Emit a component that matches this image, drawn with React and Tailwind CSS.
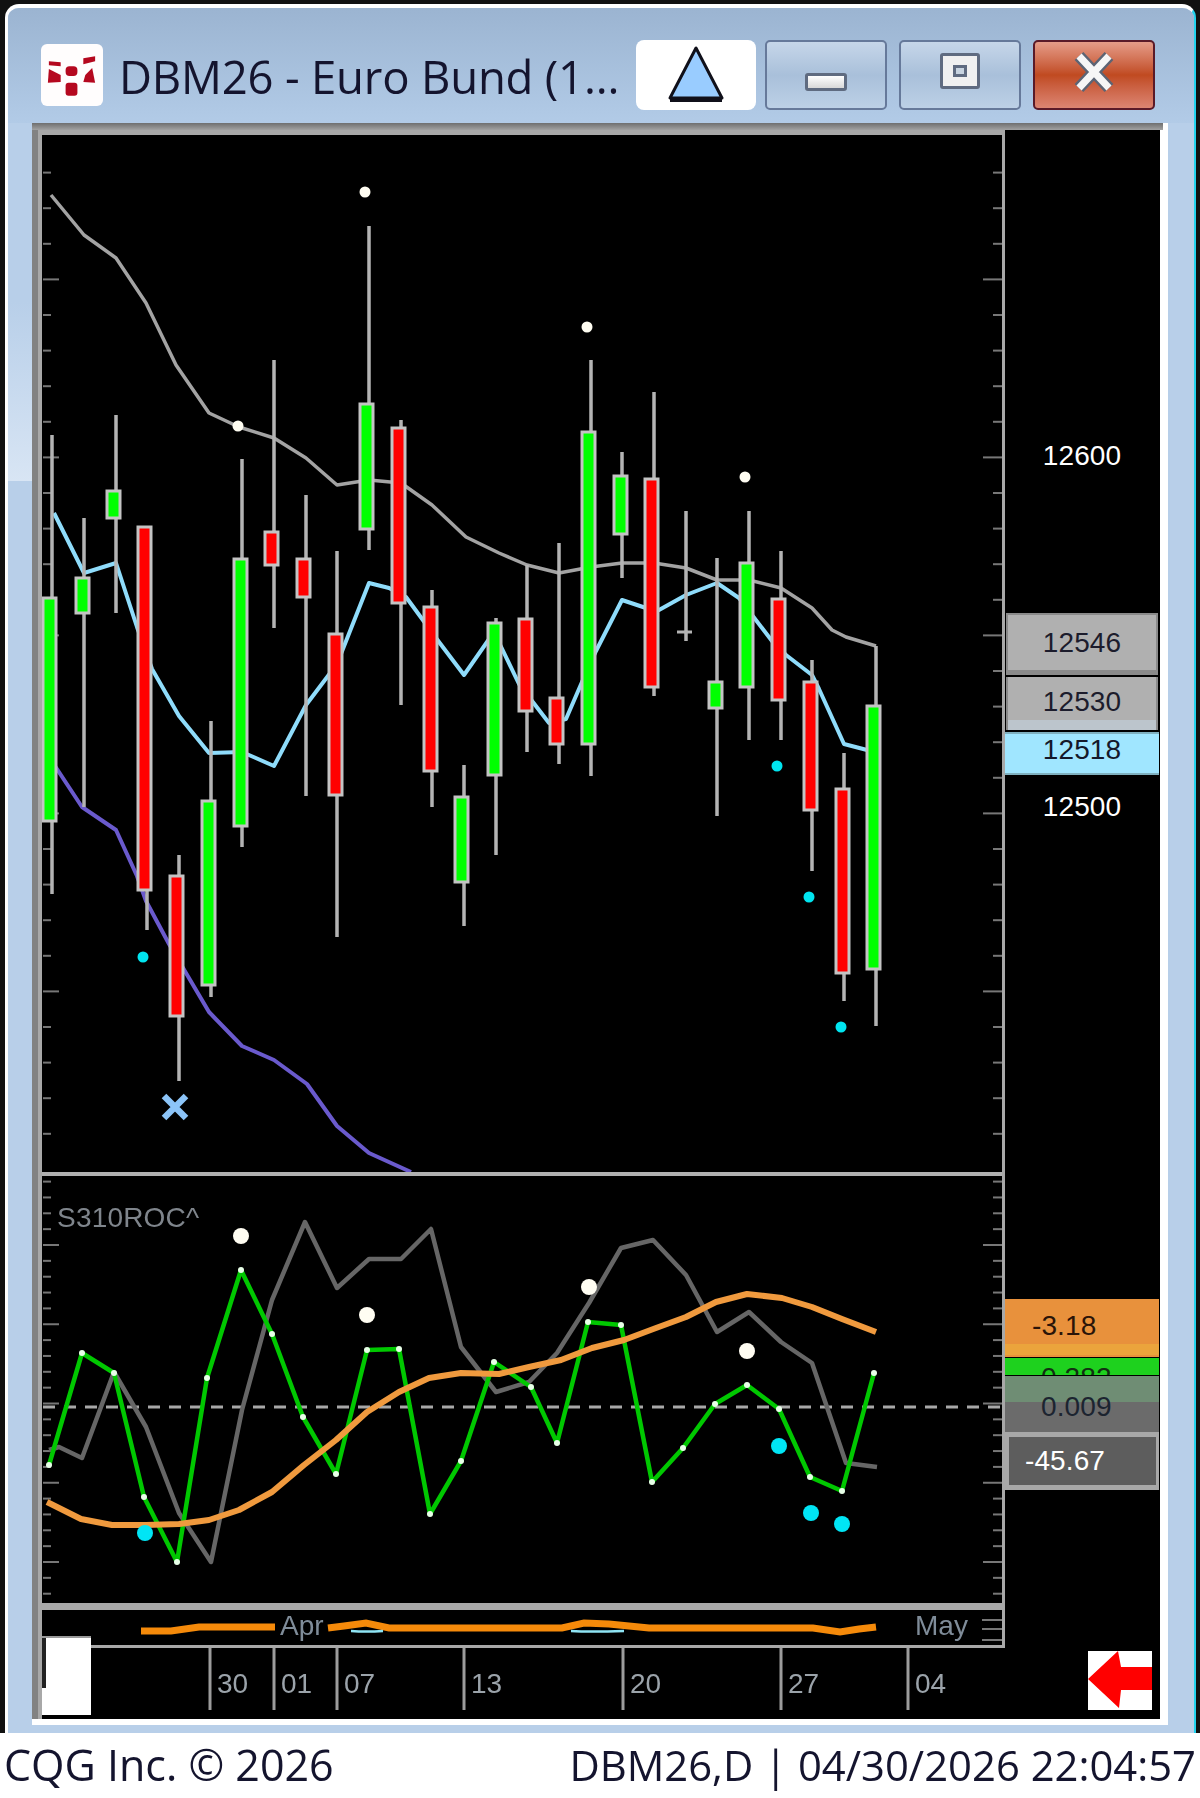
const candles = [
  // x, wickTop, wickBottom, bodyLeft, bodyTop, bodyBottom, up
  [53, 435, 894, 44, 598, 821, true],
  [85, 518, 807, 77, 578, 613, true],
  [117, 415, 613, 108, 491, 518, true],
  [148, 527, 930, 139, 527, 890, false],
  [180, 855, 1081, 171, 876, 1016, false],
  [212, 721, 997, 203, 801, 985, true],
  [243, 459, 847, 235, 559, 826, true],
  [275, 360, 628, 266, 532, 565, false],
  [307, 495, 796, 298, 559, 597, false],
  [338, 551, 937, 330, 634, 795, false],
  [370, 226, 550, 361, 404, 529, true],
  [402, 420, 705, 393, 428, 603, false],
  [433, 590, 807, 425, 607, 771, false],
  [465, 765, 926, 456, 797, 882, true],
  [497, 618, 855, 489, 623, 775, true],
  [528, 565, 752, 520, 619, 711, false],
  [560, 543, 764, 551, 698, 744, false],
  [592, 360, 776, 583, 432, 744, true],
  [623, 452, 578, 615, 476, 534, true],
  [655, 392, 696, 646, 479, 687, false],
  [718, 558, 816, 710, 682, 708, true],
  [750, 511, 740, 741, 563, 687, true],
  [782, 551, 740, 773, 599, 700, false],
  [813, 660, 871, 805, 682, 810, false],
  [845, 753, 1001, 837, 789, 973, false],
  [877, 646, 1026, 868, 706, 969, true],
]

const upperLine = '52,195 85,235 117,258 147,303 177,365 210,413 240,427 275,438 307,458 338,485 370,480 402,483 433,505 467,537 500,553 528,565 560,573 592,567 623,563 655,563 687,568 718,580 750,580 782,588 813,608 833,630 847,637 877,646'
const midLine = '55,513 85,573 117,563 138,627 153,669 180,716 210,753 243,752 275,766 307,705 338,664 370,583 390,588 407,597 440,642 465,675 495,632 520,684 550,723 567,719 583,682 597,651 623,600 647,608 660,610 687,595 718,583 740,598 773,641 787,655 813,675 820,689 845,744 868,750'
const lowLine = '52,760 83,807 117,830 138,876 147,901 170,944 187,973 210,1012 243,1046 275,1060 308,1084 338,1126 370,1153 412,1172'
const rocGreen = [[50, 1465], [83, 1353], [115, 1373], [145, 1497], [178, 1562], [208, 1378], [242, 1270], [273, 1334], [304, 1417], [337, 1474], [368, 1350], [400, 1349], [431, 1514], [462, 1461], [495, 1362], [532, 1387], [558, 1443], [589, 1322], [622, 1325], [653, 1482], [684, 1448], [716, 1404], [748, 1385], [780, 1409], [811, 1477], [843, 1491], [875, 1373]]
const rocGray = '50,1450 60,1447 83,1458 115,1372 147,1427 180,1513 212,1562 243,1410 273,1300 306,1222 338,1288 370,1259 402,1259 432,1229 462,1347 497,1392 530,1382 558,1353 590,1303 622,1248 654,1240 687,1275 718,1332 750,1312 782,1342 813,1363 847,1463 878,1467'
const rocOrange = '48,1502 82,1519 113,1525 147,1525 180,1524 210,1520 240,1510 273,1492 305,1465 337,1440 368,1412 400,1392 430,1378 462,1373 500,1374 530,1367 562,1360 593,1348 625,1340 657,1328 687,1317 717,1302 748,1294 783,1298 813,1307 843,1319 877,1332'

const mainTicks = Array.from({ length: 28 }, (_, i) => 172.6 + i * 35.6)
const lowerTicks = Array.from({ length: 27 }, (_, i) => 1181.6 + i * 15.85)
const dates = [[211, '30'], [275, '01'], [338, '07'], [465, '13'], [624, '20'], [782, '27'], [909, '04']]

function Ticks({ ys, isMajor }) {
  return ys.map((y, i) => {
    const big = isMajor(i)
    return (
      <g key={y} stroke="#777777" strokeWidth="2">
        <line x1="44" x2={big ? 60 : 52} y1={y} y2={y} />
        <line x1={big ? 984 : 994} x2="1003" y1={y} y2={y} />
      </g>
    )
  })
}

function Dot({ x, y, r = 5.5, color = '#fffdf2' }) {
  return <circle cx={x} cy={y} r={r} fill={color} />
}

function MainChart() {
  return (
    <svg className="block w-full h-[1037px] blur-[0.7px]" viewBox="43 135 960 1037">
      <Ticks ys={mainTicks} isMajor={(i) => (i + 2) % 5 === 0} />
      <g fill="none" strokeLinejoin="round">
        <polyline points={upperLine} stroke="#a3a3a3" strokeWidth="3.5" />
        <polyline points={midLine} stroke="#8fdcfb" strokeWidth="4" />
        <polyline points={lowLine} stroke="#6a5acd" strokeWidth="4" />
      </g>
      {candles.map(([x, wt, wb]) => (
        <line key={x} x1={x} x2={x} y1={wt} y2={wb} stroke="#b4b4b4" strokeWidth="3.5" />
      ))}
      <line x1="687" x2="687" y1="511" y2="641" stroke="#b4b4b4" strokeWidth="3.5" />
      <line x1="678" x2="693" y1="632" y2="632" stroke="#b4b4b4" strokeWidth="3" />
      {candles.map(([x, , , left, top, bottom, up]) => (
        <rect key={x} x={left} y={top} width="13" height={bottom - top} fill={up ? '#00ff00' : '#ff0000'} stroke="#c4c4c4" strokeWidth="3" />
      ))}
      <Dot x={366} y={192} />
      <Dot x={239} y={426} />
      <Dot x={588} y={327} />
      <Dot x={746} y={477} />
      <Dot x={144} y={957} color="#00e5f0" />
      <Dot x={778} y={766} color="#00e5f0" />
      <Dot x={810} y={897} color="#00e5f0" />
      <Dot x={842} y={1027} color="#00e5f0" />
      <path d="M165 1096 L187 1118 M187 1096 L165 1118" stroke="#8cc4f8" strokeWidth="6.5" />
    </svg>
  )
}

function RocChart() {
  return (
    <svg className="block w-full h-[427px] blur-[0.7px]" viewBox="43 1176 960 427">
      <Ticks ys={lowerTicks} isMajor={(i) => (i + 1) % 5 === 0} />
      <line x1="44" x2="1003" y1="1407" y2="1407" stroke="#a8a8a8" strokeWidth="3" strokeDasharray="12 9" />
      <g fill="none" strokeLinejoin="round">
        <polyline points={rocGray} stroke="#666666" strokeWidth="4.5" />
        <polyline points={rocGreen.map((p) => p.join(',')).join(' ')} stroke="#00c800" strokeWidth="4.5" />
        <polyline points={rocOrange} stroke="#f09a3e" strokeWidth="6" />
      </g>
      {rocGreen.map(([x, y]) => (
        <circle key={x} cx={x} cy={y} r="3" fill="#e8ffe8" />
      ))}
      <Dot x={242} y={1236} r={8} />
      <Dot x={368} y={1315} r={8} />
      <Dot x={590} y={1287} r={8} />
      <Dot x={748} y={1351} r={8} />
      <Dot x={146} y={1533} r={8} color="#00e5f5" />
      <Dot x={780} y={1446} r={8} color="#00e5f5" />
      <Dot x={812} y={1513} r={8} color="#00e5f5" />
      <Dot x={843} y={1524} r={8} color="#00e5f5" />
      <text x="58" y="1227" fontSize="28" fill="#7f858c" letterSpacing="0.2">S310ROC^</text>
    </svg>
  )
}

function MiniChart() {
  return (
    <svg className="block w-full h-[35px] blur-[0.6px]" viewBox="43 1610 960 35">
      <polyline points="142,1631 172,1631 200,1627 276,1627" fill="none" stroke="#f58a0a" strokeWidth="7" />
      <polyline points="329,1628 345,1626 367,1623 390,1628 563,1628 585,1623 610,1624 650,1628 814,1628 841,1632 860,1629 877,1627" fill="none" stroke="#f58a0a" strokeWidth="7" />
      <path d="M352 1631 Q367 1632 384 1631 M572 1631 Q590 1632 625 1631" fill="none" stroke="#8fe4f4" strokeWidth="2.5" />
      <text x="281" y="1635" fontSize="28" fill="#7f8c99">Apr</text>
      <text x="916" y="1635" fontSize="28" fill="#7f8c99">May</text>
      <g stroke="#777777" strokeWidth="2">
        <line x1="983" x2="1003" y1="1620" y2="1620" />
        <line x1="983" x2="1003" y1="1629" y2="1629" />
        <line x1="983" x2="1003" y1="1640" y2="1640" />
      </g>
    </svg>
  )
}

function DateAxis() {
  return (
    <div className="relative h-[70px]">
      <div className="absolute left-0 bottom-[3px] w-[49px] h-[79px] bg-white border-t-[2px] border-[#9a9a9a]">
        <div className="w-[4px] h-[50px] bg-[#222222]" />
      </div>
      <svg className="block w-full h-[70px] blur-[0.6px]" viewBox="43 1648 963 70">
        {dates.map(([x, label]) => (
          <g key={label}>
            <line x1={x} x2={x} y1="1648" y2="1710" stroke="#9c9c9c" strokeWidth="3" />
            <text x={x + 7} y="1693" fontSize="28" fill="#9ba3aa">{label}</text>
          </g>
        ))}
      </svg>
    </div>
  )
}

function AxisValue({ children }) {
  return <div className="h-[32px] flex items-center justify-center text-white">{children}</div>
}

function RightAxis() {
  return (
    <div className="w-[154px] shrink-0 flex flex-col text-[28px] leading-none tracking-[0.1px]">
      <div className="mt-[310px]">
        <AxisValue>12600</AxisValue>
      </div>
      <div className="mt-[141px] h-[62px] mx-[1px] bg-[#b0b0b0] border-t-[2px] border-b-[5px] border-x-[2px] border-[#8a8a8a] flex items-center justify-center text-[#1c1c2c]">12546</div>
      <div className="mt-[2px] h-[53px] mx-[1px] border-x-[2px] border-[#8a8a8a] bg-[#b0b0b0] flex flex-col">
        <div className="flex-1 flex items-center justify-center text-[#1c1c2c] pt-[6px]">12530</div>
        <div className="h-[10px] bg-[#bcc5cc]" />
      </div>
      <div className="mt-[2px] h-[43px] bg-[#a0e6ff] border-y-[2px] border-[#7fb0bf] flex items-center justify-center text-[#14182a] pb-[8px]">12518</div>
      <div className="mt-[16px]">
        <AxisValue>12500</AxisValue>
      </div>
      <div className="mt-[476px] h-[58px] bg-[#e8913c] flex flex-col text-[#2a1408]">
        <div className="flex-1 flex items-center pl-[27px] pt-[8px]">-3.18</div>
        <div className="h-[11px] mb-[2px] bg-[#eba43c]" />
      </div>
      <div className="mt-[1px] h-[17px] bg-[#1ed11e] overflow-hidden pl-[36px] pt-[6px] text-[#123012]">0.282</div>
      <div className="mt-[1px] h-[56px] bg-[#6b6b6b] flex flex-col relative">
        <div className="h-[26px] bg-[#6f8d74]" />
        <div className="absolute inset-0 flex items-center pl-[36px] pt-[6px] text-[#1c2430]">0.009</div>
      </div>
      <div className="h-[58px] bg-[#5d5d5d] border-y-[5px] border-l-[4px] border-r-[3px] border-[#a8a8a8] flex items-center pl-[16px] text-white">-45.67</div>
      <div className="mt-[161px] self-end mr-[7px] w-[64px] h-[59px] bg-white">
        <svg className="block w-full h-full" viewBox="0 0 64 59">
          <path d="M0 28 L30 0 L33 16 L64 16 L64 39 L33 39 L31 57 Z" fill="#ff0000" />
        </svg>
      </div>
    </div>
  )
}

function CqgLogo() {
  return (
    <div className="w-[62px] h-[62px] mt-[4px] rounded-[6px] bg-[#fffdfd] shrink-0 blur-[0.6px]">
      <svg className="block w-full h-full" viewBox="0 0 63 62">
        <g fill="#b5081f">
          <path d="M8 17 L20 18 L20 22 L8 21 Z" />
          <path d="M8 25 L20 31 L20 38 L7 39 Z" />
          <rect x="25" y="22" width="12" height="10" rx="4" />
          <rect x="25" y="39" width="12" height="13" rx="3" />
          <path d="M43 14 L55 12 L55 17 L43 20 Z" />
          <path d="M52 24 L55 39 L43 38 L45 31 Z" />
        </g>
      </svg>
    </div>
  )
}

function WindowButton({ color, children }) {
  return (
    <div className={`w-[122px] h-[70px] rounded-[5px] border-[2px] flex items-center justify-center ${color}`}>
      {children}
    </div>
  )
}

function TitleBar() {
  return (
    <div className="h-[115px] shrink-0 flex items-start pt-[32px] pl-[33px] pr-[34px] bg-gradient-to-b from-[#9bb4d1] to-[#b2cbe7]">
      <CqgLogo />
      <div className="ml-[16px] mt-[5px] w-[517px] text-[45.5px] leading-[62px] text-[#14142e] tracking-[-0.2px] whitespace-nowrap font-['Open_Sans',sans-serif] overflow-hidden blur-[0.4px]">
        DBM26 - Euro Bund (1...
      </div>
      <div className="w-[120px] h-[70px] rounded-[8px] bg-white flex items-center justify-center">
        <svg className="w-[60px] h-[60px]" viewBox="0 0 60 60">
          <path d="M30 3 L4 53 L56 53 Z" fill="#99ccff" stroke="#10101a" strokeWidth="3" strokeLinejoin="round" />
          <line x1="4" x2="56" y1="55" y2="55" stroke="#10101a" strokeWidth="4" />
        </svg>
      </div>
      <div className="ml-[9px]">
        <WindowButton color="border-[#66799a] bg-gradient-to-b from-[#c6d6e9] via-[#a9c0da] to-[#bcd0e6]">
          <div className="w-[42px] h-[18px] rounded-[3px] mt-[14px] border-[3px] border-[#5f6b80] bg-gradient-to-b from-white to-[#d8d8d8]" />
        </WindowButton>
      </div>
      <div className="ml-[12px]">
        <WindowButton color="border-[#66799a] bg-gradient-to-b from-[#c6d6e9] via-[#a9c0da] to-[#bcd0e6]">
          <div className="w-[40px] h-[36px] rounded-[3px] border-[3px] border-[#5f6b80] bg-[#f0f0f0] flex items-center justify-center mb-[8px]">
            <div className="w-[14px] h-[12px] border-[3px] border-[#5f6b80] bg-[#c8d4e0]" />
          </div>
        </WindowButton>
      </div>
      <div className="ml-[12px]">
        <WindowButton color="border-[#5a1a28] bg-gradient-to-b from-[#e59c88] via-[#c04a20] to-[#dc8572]">
          <svg className="w-[46px] h-[44px] mb-[6px]" viewBox="0 0 46 44">
            <path d="M8 6 L38 38 M38 6 L8 38" stroke="#5c6474" strokeWidth="12" />
            <path d="M8 6 L38 38 M38 6 L8 38" stroke="#f6f6f6" strokeWidth="7" />
          </svg>
        </WindowButton>
      </div>
    </div>
  )
}

export default function App() {
  return (
    <div className="w-[1200px] h-[1798px] bg-white flex flex-col overflow-hidden font-['Liberation_Sans',Arial,sans-serif]">
      <div className="h-[1733px] shrink-0 bg-[#111111] pl-[5px] pt-[4px] pr-[4px]">
        <div className="h-full border-l-[3px] border-t-[4px] border-r-[2px] border-white rounded-t-[14px] flex flex-col overflow-hidden border-r-[#22d3ee] bg-[#b8cfe9]">
          <TitleBar />
          <div className="flex-1 relative flex flex-col pl-[24px] pr-[26px] pb-[8px]">
            {/* reflection on the left edge of the glass frame */}
            <div className="absolute left-0 top-0 w-[24px] h-[358px] bg-gradient-to-b from-[#b8cfe9] via-[#b8cfe9] to-[#d8e5f4]" />
            <div className="relative flex-1 flex flex-col bg-white pr-[8px] pb-[6px]">
              <div className="h-[7px] shrink-0 -mr-[3px] bg-gradient-to-b from-[#6f6f6f] to-[#a2a2a2]" />
              <div className="flex-1 flex border-l-[6px] border-[#828282]">
                <div className="flex-1 border-l-[4px] border-[#a8a8a8] bg-black flex">
                  <div className="w-[963px] shrink-0 flex flex-col">
                    <div className="border-t-[5px] border-r-[3px] border-b-[3px] border-[#a8a8a8]">
                      <MainChart />
                      <div className="h-[4px] bg-[#b0b0b0]" />
                      <RocChart />
                      <div className="h-[7px] bg-[#a8a8a8]" />
                      <MiniChart />
                    </div>
                    <DateAxis />
                  </div>
                  <RightAxis />
                </div>
              </div>
            </div>
          </div>
        </div>
      </div>
      <div className="flex-1 flex items-center justify-between pl-[4px] pr-[4px] text-[#14142e] font-['Open_Sans',sans-serif] whitespace-nowrap blur-[0.4px]">
        <span className="text-[43px]">CQG Inc. © 2026</span>
        <span className="text-[41.8px]">DBM26,D | 04/30/2026 22:04:57</span>
      </div>
    </div>
  )
}
